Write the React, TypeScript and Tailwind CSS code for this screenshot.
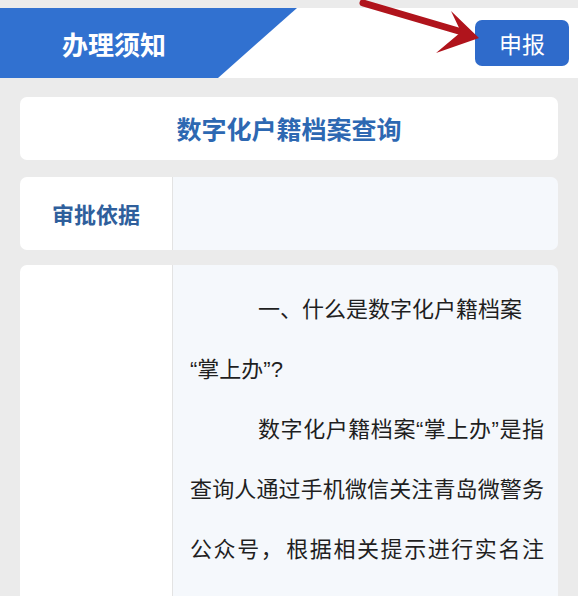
import React from 'react';

const cjk = { fontFamily: '"Noto Sans CJK SC", "Noto Sans", sans-serif' };
// latin font first so the curly quotes and "?" come out narrow like the reference
const body = { fontFamily: '"Liberation Sans", "Noto Sans CJK SC", sans-serif' };

export default function App() {
  return <div className="relative w-[578px] h-[596px] overflow-hidden bg-[#ebebeb] pt-[8px]" style={cjk}>
      {/* Header */}
      <div className="flex items-center h-[70px] bg-white">
        <div className="h-full w-[297px] bg-[#3171d0] flex items-center pl-[62px] [clip-path:polygon(0_0,297px_0,218px_100%,0_100%)]">
          <span className="text-white text-[26px] font-bold">办理须知</span>
        </div>
        <button className="ml-auto mr-[9px] w-[94px] h-[46px] rounded-[7px] bg-[#2f6bcb] text-white text-[23px] flex items-center justify-center">
          申报
        </button>
      </div>

      {/* red arrow pointing at the button */}
      <svg className="absolute left-0 top-0" width="578" height="80" viewBox="0 0 578 80">
        <line x1="363" y1="3" x2="462" y2="32" stroke="#b0141c" strokeWidth="7" strokeLinecap="round" />
        <polygon points="479,38 451,11 461,32 436,53" fill="#b0141c" />
      </svg>

      {/* Title card */}
      <div className="mx-[20px] mt-[19px] h-[63px] rounded-[7px] bg-white flex items-center justify-center">
        <span className="text-[25px] font-bold text-[#2d68b2]">数字化户籍档案查询</span>
      </div>

      {/* 审批依据 */}
      <div className="mx-[20px] mt-[17px] h-[73px] rounded-[7px] overflow-hidden flex">
        <div className="w-[152px] bg-white flex items-center pl-[32px]">
          <span className="text-[22px] font-bold text-[#2f5f9c]">审批依据</span>
        </div>
        <div className="w-px bg-[#e3e3e3]" />
        <div className="flex-1 bg-[#f5f8fc]" />
      </div>

      {/* content */}
      <div className="mx-[20px] mt-[15px] h-[400px] rounded-t-[7px] overflow-hidden flex">
        <div className="w-[152px] bg-white" />
        <div className="w-px bg-[#e3e3e3]" />
        <div className="flex-1 bg-[#f5f8fc] pl-[17px] pr-[14px] pt-[15px] text-[22px] leading-[60px] text-[#1f1f1f]" style={body}>
          <p className="indent-[68px]">一、什么是数字化户籍档案<wbr />“掌上办”?</p>
          <p className="indent-[68px] text-justify">
            数字化户籍档案“掌上办”是指查询人通过手机微信关注青岛微警务公众号<span className="tracking-[2px]">，</span>根据相关提示进行实名注册后，即可在线查询本人数字化户籍档案信息。
          </p>
        </div>
      </div>
    </div>;
}
